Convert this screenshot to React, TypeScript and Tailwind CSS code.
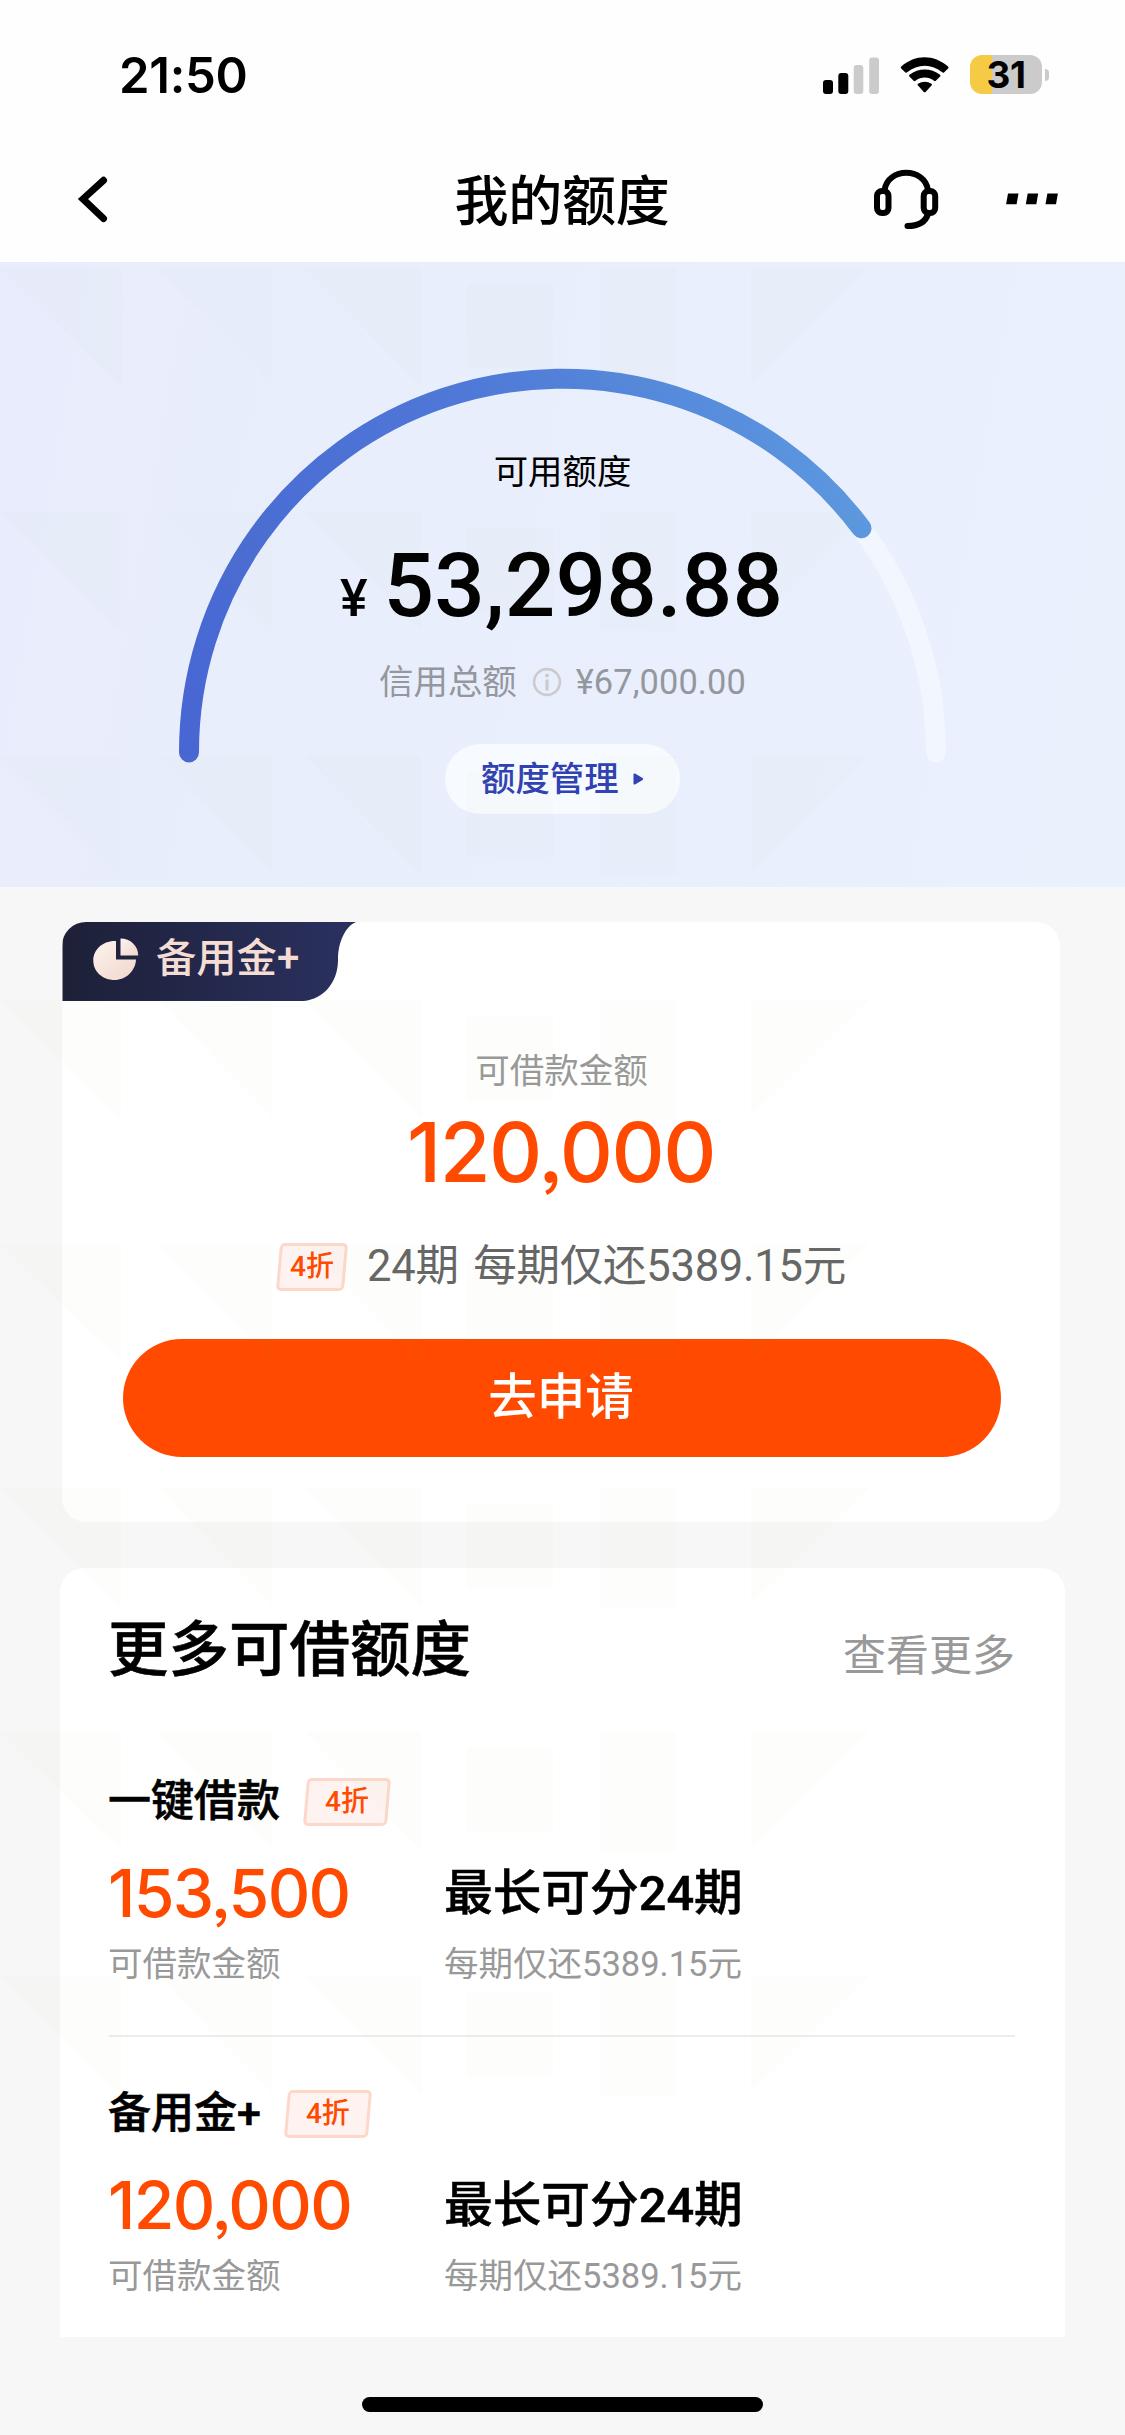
import React from "react";

const cjk = "font-[Roboto,'Noto_Sans_CJK_SC',sans-serif]";

function StatusBar() {
  return (
    <div className="flex h-[146px] items-start justify-between pl-[119px] pr-[76px] pt-[54px]">
      <span className="font-[Inter,sans-serif] text-[49px] font-semibold leading-[43px] tracking-[-0.3px]">21:50</span>
      <div className="flex h-[41px] items-center">
        <svg className="mt-px" width="57" height="37" viewBox="0 0 57 37">
          <rect x="0" y="23" width="10" height="14" rx="3" />
          <rect x="15.3" y="16" width="10" height="21" rx="3" />
          <rect x="30.7" y="8" width="9.6" height="29" rx="3" fill="#cbcbcb" />
          <rect x="46.2" y="0.5" width="9.8" height="36.500" rx="3" fill="#cbcbcb" />
        </svg>
        <svg className="ml-[20px]" width="50" height="36" viewBox="0 0 50 36">
          <path d="M1.200 11.500 Q0.300 10.500 1.300 9.600 C15 -2.800 34 -2.800 48 9.600 Q49 10.500 48.100 11.500 L44 15.400 Q43.200 16.100 42.200 15.300 C32 6.500 17.500 6.500 7.200 15.300 Q6.200 16.100 5.400 15.400 Z" />
          <path d="M9.400 19.500 Q8.500 18.600 9.500 17.700 C18.500 10.800 31 10.800 40 17.700 Q41 18.600 40.100 19.500 L35.800 23.800 Q35 24.500 34 23.700 C28.500 19.500 21 19.500 15.500 23.700 Q14.500 24.500 13.600 23.800 Z" />
          <path d="M17.800 28.300 Q17 27.300 18 26.700 C22.300 24 27.300 24 31.500 26.700 Q32.500 27.300 31.700 28.300 L25.600 34.900 Q24.700 35.700 23.800 34.900 Z" />
        </svg>
        <div className="ml-[20px] flex items-center">
          <div className="flex h-[39px] w-[72px] items-center justify-center rounded-[12px] bg-[linear-gradient(90deg,#f5cb45_22.5px,#cbcbcb_22.5px)]">
            <span className="font-[Inter,sans-serif] text-[37px] font-bold leading-[39px] tracking-[-0.5px]">31</span>
          </div>
          <div className="ml-[3px] h-[12px] w-[4px] rounded-r-full bg-[#cbcbcb]" />
        </div>
      </div>
    </div>
  );
}

function NavBar() {
  return (
    <div className="grid h-[116px] grid-cols-3 items-start px-[66px]">
      <svg className="ml-[10px] mt-[29px]" width="34" height="49" viewBox="0 0 34 49" fill="none" stroke="#000" strokeWidth="7" strokeLinecap="round" strokeLinejoin="miter">
        <path d="M27.500 5.300 L7 24 L27.500 43.500" />
      </svg>
      <h1 className="-ml-px mt-[24px] text-center text-[54px] font-medium leading-[65px] tracking-[-0.2px]">我的额度</h1>
      <div className="mt-[23px] flex justify-end">
        <svg width="68" height="62" viewBox="0 0 68 62" fill="none" stroke="#000" strokeWidth="6" strokeLinecap="round">
          <path d="M12.500 21 C16 -2 52.500 -2 56 21" />
          <rect x="5" y="22" width="11.500" height="22" rx="5" />
          <rect x="51.700" y="22" width="11.500" height="22" rx="5" />
          <path d="M56 45 C53.500 53 46 57 35.500 57" />
        </svg>
        <svg className="ml-[65px] mt-[24px]" width="54" height="12" viewBox="0 0 54 12">
          <path d="M3 0.500 H13.500 L11.600 11.300 H1.100 Z M22.700 0.500 H33.200 L31.300 11.300 H20.800 Z M42.400 0.500 H52.900 L51 11.300 H40.500 Z" />
        </svg>
      </div>
    </div>
  );
}

function Gauge() {
  return (
    <svg className="absolute left-[178px] top-[105px]" width="770" height="398" viewBox="178 367 770 398" fill="none" strokeWidth="20" strokeLinecap="round">
      <defs>
        <linearGradient id="arc" gradientUnits="userSpaceOnUse" x1="189" y1="700" x2="860" y2="480">
          <stop offset="0" stopColor="#4867d3" />
          <stop offset="0.5" stopColor="#4f78d7" />
          <stop offset="1" stopColor="#5c98df" />
        </linearGradient>
      </defs>
      <path d="M189 752.500 A373.500 373.500 0 0 1 936 752.500" stroke="#f2f6fe" />
      <path d="M189 752.500 A373.500 373.500 0 0 1 861.500 528.300" stroke="url(#arc)" />
    </svg>
  );
}

function Hero() {
  return (
    <section className="relative flex h-[625px] flex-col items-center bg-[linear-gradient(100deg,#e9ecfc_0%,#e8eefc_30%,#e9effd_65%,#ebf0fd_100%)] pt-[190px]">
      <Gauge />
      <div className="text-[34.400px] leading-[40px]">可用额度</div>
      <div className="mr-[2px] mt-[50px] flex h-[88px] items-baseline leading-[88px]">
        <span className="text-[52px] font-medium">¥</span>
        <span className="ml-[16px] text-[89px] font-medium tracking-[0.1px]">53,298.88</span>
      </div>
      <div className="mt-[32px] flex h-[40px] items-center text-[34.400px] leading-[40px] text-[#94979d]">
        <span>信用总额</span>
        <svg className="ml-[15px]" width="30" height="30" viewBox="0 0 30 30" fill="none" stroke="#cbcbcd" strokeWidth="2.600">
          <circle cx="15" cy="15" r="12.900" />
          <path d="M15 12.500 V23.500" strokeWidth="3.200" />
          <circle cx="15" cy="8.500" r="2" fill="#cbcbcd" stroke="none" />
        </svg>
        <span className="ml-[14px] tracking-[0.100px]">¥67,000.00</span>
      </div>
      <button className="mt-[42px] flex h-[70px] w-[235px] items-center rounded-full bg-[#f7fafe] pl-[36px] text-[34.400px] font-medium leading-[40px] text-[#2f41b3]">
        额度管理
        <svg className="ml-[14px]" width="11" height="12" viewBox="0 0 11 12" fill="#2f41b3">
          <path d="M0.500 1.500 Q0.500 0 2 0.600 L9.600 5 Q10.800 6 9.600 7 L2 11.400 Q0.500 12 0.500 10.500 Z" />
        </svg>
      </button>
    </section>
  );
}

function Discount({ wide = false }: { wide?: boolean }) {
  return (
    <span className={wide ? "relative flex h-[48px] w-[88px] items-center justify-center" : "relative flex h-[48px] w-[72px] items-center justify-center"}>
      <span className="absolute inset-x-[2px] inset-y-0 -skew-x-[5deg] rounded-[5px] border-[3px] border-[#fdd8ca] bg-[#fef3f0]" />
      <span className="relative text-[28px] font-medium leading-[46px] text-[#ff4a00]">4折</span>
    </span>
  );
}

function ReserveCard() {
  return (
    <section className="ml-[62px] mt-[35px] h-[600px] w-[998px] overflow-hidden rounded-[24px] bg-white">
      <div className="relative h-[79px] w-[296px]">
        <svg className="absolute left-0 top-0" width="296" height="79" viewBox="0 0 296 79">
          <defs>
            <linearGradient id="tag" x1="0" x2="1" y1="0" y2="0">
              <stop offset="0" stopColor="#1d2037" />
              <stop offset="1" stopColor="#2a3160" />
            </linearGradient>
          </defs>
          <path d="M0.500 0 H294 C284 4 276 19 276 38 C276 61 261 77 242 79 H0.500 Z" fill="url(#tag)" />
        </svg>
        <div className="relative flex h-[72px] items-center pl-[31px]">
          <svg className="mt-[3px]" width="46" height="43" viewBox="0 0 46 43">
            <defs>
              <linearGradient id="pie" x1="0" x2="1" y1="0" y2="1">
                <stop offset="0" stopColor="#fdf3ef" />
                <stop offset="1" stopColor="#f1d6cb" />
              </linearGradient>
            </defs>
            <path d="M23 3 V21.500 H43 C42.500 33 33 42 21.500 42 C9.500 42 0.300 33.500 0.300 22.500 C0.300 11.500 10 2.300 23 3 Z" fill="url(#pie)" />
            <path d="M27.500 0.500 C37.500 0.500 45.200 8 45.200 17.500 H27.500 Z" fill="url(#pie)" />
          </svg>
          <span className="ml-[17px] text-[40.300px] font-medium leading-[73px] text-[#f5ddd3]">备用金+</span>
        </div>
      </div>
      <div className="flex flex-col items-center pt-[51px]">
        <div className="ml-px text-[34.500px] leading-[38px] text-[#999]">可借款金额</div>
        <div className="mt-[22px] font-[Inter,sans-serif] text-[82.500px] font-[540] leading-[80px] tracking-[-1.500px] text-[#ff4a00] [font-feature-settings:'ss03']">120,000</div>
        <div className="mt-[51px] flex h-[48px] items-center">
          <Discount />
          <span className="ml-[19px] text-[43.500px] leading-[50px] tracking-[-0.250px] text-[#666] [word-spacing:4px]">24期 每期仅还5389.15元</span>
        </div>
        <button className="ml-[2px] mt-[48px] h-[118px] w-[878px] rounded-full bg-[#ff4a00] pr-[2px] text-[48.500px] font-medium leading-[118px] text-white">去申请</button>
      </div>
    </section>
  );
}

function LoanItem({ name, amount }: { name: string; amount: string }) {
  return (
    <div>
      <div className="flex h-[48px]">
        <span className="text-[43px] font-medium leading-[46px] [-webkit-text-stroke:0.600px_#000]">{name}</span>
        <span className="ml-[23px]">
          <Discount wide />
        </span>
      </div>
      <div className="mt-[35px] grid grid-cols-[336px_1fr]">
        <div>
          <div className="font-[Inter,sans-serif] text-[66px] font-[540] leading-[64px] tracking-[-1.7px] text-[#ff4a00] [font-feature-settings:'ss03']">{amount}</div>
          <div className="mt-[20px] text-[34.500px] leading-[39px] text-[#999]">可借款金额</div>
        </div>
        <div>
          <div className="text-[48.700px] font-medium leading-[66px] [-webkit-text-stroke:0.500px_#000]">最长可分24期</div>
          <div className="mt-[18px] text-[34.500px] leading-[39px] text-[#999]">每期仅还5389.15元</div>
        </div>
      </div>
    </div>
  );
}

function MoreCard() {
  return (
    <section className="ml-[60px] mt-[46px] h-[769px] w-[1005px] rounded-t-[24px] bg-white pl-[48px] pr-[50px] pt-[51px]">
      <div className="mb-[95px] flex h-[64px] justify-between">
        <h2 className="text-[60.500px] font-medium leading-[64px] [-webkit-text-stroke:0.500px_#000]">更多可借额度</h2>
        <span className="text-[43px] leading-[75px] text-[#999]">查看更多</span>
      </div>
      <LoanItem name="一键借款" amount="153,500" />
      <div className="mb-[53px] ml-px mt-[51px] h-[2px] bg-[#ededed]" />
      <LoanItem name="备用金+" amount="120,000" />
    </section>
  );
}

/* Faint repeating backdrop shapes laid across the whole page. */
function Pattern() {
  const rows = [268, 512, 756, 1000, 1244, 1488, 1732, 1976];
  return (
    <svg className="pointer-events-none absolute left-0 top-0" width="1125" height="2435" viewBox="0 0 1125 2435" fill="#80e070" fillOpacity="0.018">
      {rows.map((y) => (
        <path
          key={y}
          transform={`translate(0 ${y})`}
          d="M0 0 H121 V119 Z M158 0 H272 V117 Z M305 0 H421 V119 Z M467 16 H553 V101 H467 Z M600 0 H676 V119 H600 Z M751 0 H869 L751 116 Z"
        />
      ))}
    </svg>
  );
}

export default function App() {
  return (
    <main className={`relative h-[2435px] w-[1125px] overflow-hidden bg-[#f7f7f7] text-black ${cjk}`}>
      <header className="bg-[#fefefe]">
        <StatusBar />
        <NavBar />
      </header>
      <Hero />
      <ReserveCard />
      <MoreCard />
      <div className="mx-auto mt-[60px] h-[15px] w-[401px] rounded-full bg-black" />
      <Pattern />
    </main>
  );
}
